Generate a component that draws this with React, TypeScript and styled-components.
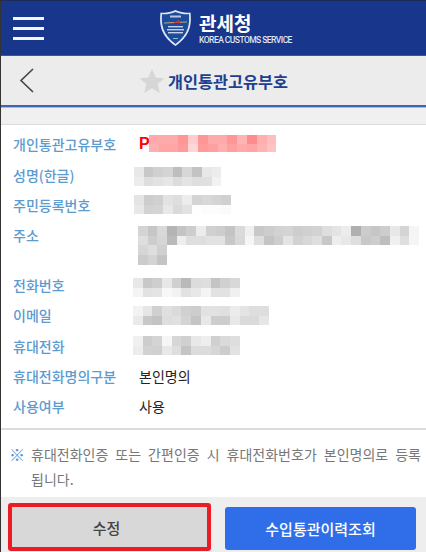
import React from "react";
import styled, { createGlobalStyle } from "styled-components";

const Global = createGlobalStyle`
  html, body { margin: 0; padding: 0; height: 552px; overflow: hidden; background: #fff; }
  * { box-sizing: border-box; }
  body { font-family: "Noto Sans CJK KR", "Noto Sans", sans-serif; }
`;

const Page = styled.div`
  width: 426px;
  height: 552px;
  border-left: 1px solid #333;
  display: flex;
  flex-direction: column;
  overflow: hidden;
  background: #fff;
`;

const TopBar = styled.header`
  height: 56px;
  flex: none;
  background: #18368c;
  border-top: 1px solid #1d2a55;
  border-bottom: 1px solid #555;
  display: flex;
  align-items: center;
  justify-content: center;
  position: relative;
`;

const Burger = styled.button`
  position: absolute;
  left: 12px;
  top: 16px;
  width: 31px;
  height: 23px;
  border: 0;
  padding: 0;
  background: none;
  display: flex;
  flex-direction: column;
  justify-content: space-between;
  & > span { display: block; height: 3px; background: #f4f6fb; }
`;

const Brand = styled.div`
  display: flex;
  align-items: center;
  gap: 7px;
  margin-left: 24px;
`;

const BrandText = styled.div`
  display: flex;
  flex-direction: column;
  color: #fff;
`;

const BrandTitle = styled.div`
  font-size: 19px;
  font-weight: 700;
  line-height: 24px;
`;

const BrandSub = styled.div`
  font-family: "Roboto", sans-serif;
  font-size: 8.5px;
  font-weight: 500;
  letter-spacing: -0.55px;
  line-height: 11px;
  color: #dfe5f3;
  white-space: nowrap;
`;

const SubBar = styled.div`
  height: 49px;
  flex: none;
  background: #ececec;
  display: flex;
  align-items: center;
  justify-content: center;
  position: relative;
`;

const Back = styled.svg`
  position: absolute;
  left: 18px;
  top: 11px;
`;

const PageTitle = styled.h1`
  margin: 0;
  display: flex;
  align-items: center;
  gap: 3px;
  font-size: 16.3px;
  line-height: 24px;
  font-weight: 700;
  color: #223f8f;
`;

const Rule = styled.div`
  height: 3px;
  flex: none;
  background: #3f66b4;
  border-bottom: 1px solid #a9bbdc;
`;

const Gap = styled.div`
  height: 17px;
  flex: none;
  background: #f0f0f0;
  border-bottom: 1px solid #dcdcdc;
`;

const Table = styled.div`
  flex: none;
  padding: 4px 0 0 12px;
  height: 303px;
  display: flex;
  flex-direction: column;
`;

const Row = styled.div<{ $h?: number }>`
  height: ${(p) => p.$h ?? 30}px;
  flex: none;
  display: grid;
  grid-template-columns: 121px 1fr;
  align-items: start;
`;

const Label = styled.div`
  font-size: 14px;
  line-height: 30px;
  font-weight: 500;
  color: #5b9bcf;
  white-space: nowrap;
`;

const Value = styled.div`
  font-size: 14px;
  line-height: 30px;
  color: #222;
  margin-left: 5px;
`;

const Blur = styled.div<{ $x?: number; $y: number }>`
  margin-left: ${(p) => p.$x ?? 0}px;
  margin-top: ${(p) => p.$y}px;
  display: flex;
  align-items: flex-start;
`;

const Red = styled.span`
  color: #f00;
  font-family: "Liberation Sans", sans-serif;
  font-weight: 700;
  font-size: 16px;
  line-height: 17px;
  width: 10px;
`;

const Mosaic = styled.div`
  display: flex;
  flex-direction: column;
`;

const MosaicLine = styled.div`
  display: flex;
`;

const Cell = styled.i.attrs<{ $c: number; $pink?: boolean; $w: number; $h: number }>((p) => ({
  style: {
    background: p.$pink
      ? `rgb(255,${p.$c},${p.$c})`
      : `rgb(${p.$c},${p.$c},${p.$c})`,
    width: p.$w,
    height: p.$h,
  },
}))<{ $c: number; $pink?: boolean; $w: number; $h: number }>`
  display: block;
  flex: none;
`;

const Pixels = ({ rows, w = 9.7, h = 9.7, pink }: { rows: number[][]; w?: number; h?: number; pink?: boolean }) => (
  <Mosaic>
    {rows.map((r, i) => (
      <MosaicLine key={i}>
        {r.map((c, j) => (
          <Cell key={j} $c={c} $w={w} $h={h} $pink={pink} />
        ))}
      </MosaicLine>
    ))}
  </Mosaic>
);

const Note = styled.div`
  flex: none;
  height: 69px;
  border-top: 2px solid #dbdbe0;
  padding: 12px 5px 0 8px;
  display: flex;
  gap: 9px;
  background: #fff;
`;

const NoteMark = styled.span`
  flex: none;
  color: #5f8fd8;
  font-size: 16px;
  font-weight: 700;
  line-height: 25px;
  width: 13px;
`;

const NoteText = styled.p`
  margin: 0;
  font-size: 14px;
  line-height: 25px;
  color: #777;
  text-align: justify;
  word-break: keep-all;
`;

const Footer = styled.div`
  flex: 1;
  background: #eeeeee;
  display: flex;
  padding: 6px 9px 0 7px;
  gap: 14px;
  align-items: flex-start;
`;

const Btn = styled.button<{ $primary?: boolean }>`
  font-family: inherit;
  font-size: 15px;
  font-weight: 500;
  border-radius: 3px;
  padding: ${(p) => (p.$primary ? "0" : "0 6px 0 0")};
  width: ${(p) => (p.$primary ? 191 : 203)}px;
  height: ${(p) => (p.$primary ? 43 : 48)}px;
  margin-top: ${(p) => (p.$primary ? 4 : 0)}px;
  border: ${(p) => (p.$primary ? "0" : "4px solid #ed1c24")};
  background: ${(p) => (p.$primary ? "#2f6ee8" : "#d8d8d8")};
  color: ${(p) => (p.$primary ? "#fff" : "#444")};
`;

const Shield = () => (
  <svg width="33" height="38" viewBox="0 0 33 38">
    <path d="M16.5 1 C22 3.5 27 4 31.5 3.5 C32.5 14 32.5 26 16.5 37 C0.5 26 0.5 14 1.5 3.5 C6 4 11 3.5 16.5 1Z" fill="#dfe7f4" />
    <path d="M16.5 3 C21.5 5 26 5.6 30 5.2 C30.6 15 30 25 16.5 35 C3 25 2.4 15 3 5.2 C7 5.6 11.5 5 16.5 3Z" fill="#1d4b9c" />
    <rect x="11" y="6.5" width="11" height="2" fill="#b9c6df" />
    <path d="M5 14 L28 13" stroke="#d7c66a" strokeWidth="0.8" />
    <path d="M14 14 L20 11 L21 14 Z" fill="#d5303a" />
    <rect x="9" y="17" width="15" height="1.4" fill="#c7d2e8" />
    <rect x="8" y="20" width="17" height="1.4" fill="#c7d2e8" />
    <rect x="9" y="23" width="15" height="1.4" fill="#c7d2e8" />
    <rect x="14" y="29" width="5" height="1" fill="#9fb1d2" />
  </svg>
);

const Star = () => (
  <svg width="26" height="26" viewBox="0 0 26 26">
    <path d="M13 1 L16.6 9.4 L25.5 10.2 L18.7 16 L20.8 25 L13 20.2 L5.2 25 L7.3 16 L.5 10.2 L9.4 9.4Z" fill="#d6d6d6" />
  </svg>
);

const noteText = "휴대전화인증 또는 간편인증 시 휴대전화번호가 본인명의로 등록 됩니다.";

export default function App() {
  return (
    <>
      <Global />
      <Page>
        <TopBar>
          <Burger aria-label="메뉴"><span /><span /><span /></Burger>
          <Brand>
            <Shield />
            <BrandText>
              <BrandTitle>관세청</BrandTitle>
              <BrandSub>KOREA CUSTOMS SERVICE</BrandSub>
            </BrandText>
          </Brand>
        </TopBar>
        <SubBar>
          <Back width="16" height="28" viewBox="0 0 16 28">
            <path d="M14 2 L2 13.5 L14 25" fill="none" stroke="#444" strokeWidth="1.6" />
          </Back>
          <PageTitle><Star />개인통관고유부호</PageTitle>
        </SubBar>
        <Rule />
        <Gap />
        <Table>
          <Row $h={31}>
            <Label>개인통관고유부호</Label>
            <Blur $x={5} $y={6}>
              <Red>P</Red>
              <Pixels pink w={9.8} h={8.5} rows={[
                [170,170,170,150,205,150,170,170,150,180,140,175,190],
                [175,165,165,155,215,155,160,175,160,170,165,180,195],
              ]} />
            </Blur>
          </Row>
          <Row>
            <Label>성명(한글)</Label>
            <Blur $y={7}>
              <Pixels rows={[
                [232,200,208,212,190,215,195,232,236],
                [236,222,226,230,220,228,222,224,242],
              ]} />
            </Blur>
          </Row>
          <Row>
            <Label>주민등록번호</Label>
            <Blur $y={5}>
              <Pixels rows={[
                [228,205,208,226,222,236,212,216,212,208],
                [232,210,212,232,218,226,254,252,252,250],
              ]} />
            </Blur>
          </Row>
          <Row $h={50}>
            <Label>주소</Label>
            <Blur $x={4} $y={6}>
              <Pixels rows={[
                [212,198,216,180,196,205,236,208,205,196,218,240,200,205,210,212,205,208,210,222,228,236,175,204,198,205,232,212,245],
                [222,205,214,186,238,222,222,226,226,200,216,246,222,196,205,228,210,216,222,200,238,232,222,200,205,190,240,222,245],
                [214,222,208],
                [204,212,196],
              ]} />
            </Blur>
          </Row>
          <Row>
            <Label>전화번호</Label>
            <Blur $x={-1} $y={8}>
              <Pixels rows={[
                [232,200,206,232,208,186,220,222,196,208,216],
                [244,226,228,248,242,226,232,244,226,226,240],
              ]} />
            </Blur>
          </Row>
          <Row $h={31}>
            <Label>이메일</Label>
            <Blur $x={-1} $y={6}>
              <Pixels rows={[
                [242,230,208,224,218,208,205,226,226,224,236,228,222,222],
                [234,200,195,222,224,212,196,232,205,205,232,218,218,230],
              ]} />
            </Blur>
          </Row>
          <Row>
            <Label>휴대전화</Label>
            <Blur $x={-1} $y={5}>
              <Pixels rows={[
                [240,205,212,246,214,208,232,238,208,218,222],
                [236,210,208,232,222,196,220,220,214,205,226],
              ]} />
            </Blur>
          </Row>
          <Row>
            <Label>휴대전화명의구분</Label>
            <Value>본인명의</Value>
          </Row>
          <Row>
            <Label>사용여부</Label>
            <Value>사용</Value>
          </Row>
        </Table>
        <Note>
          <NoteMark>※</NoteMark>
          <NoteText>{noteText}</NoteText>
        </Note>
        <Footer>
          <Btn>수정</Btn>
          <Btn $primary>수입통관이력조회</Btn>
        </Footer>
      </Page>
    </>
  );
}
